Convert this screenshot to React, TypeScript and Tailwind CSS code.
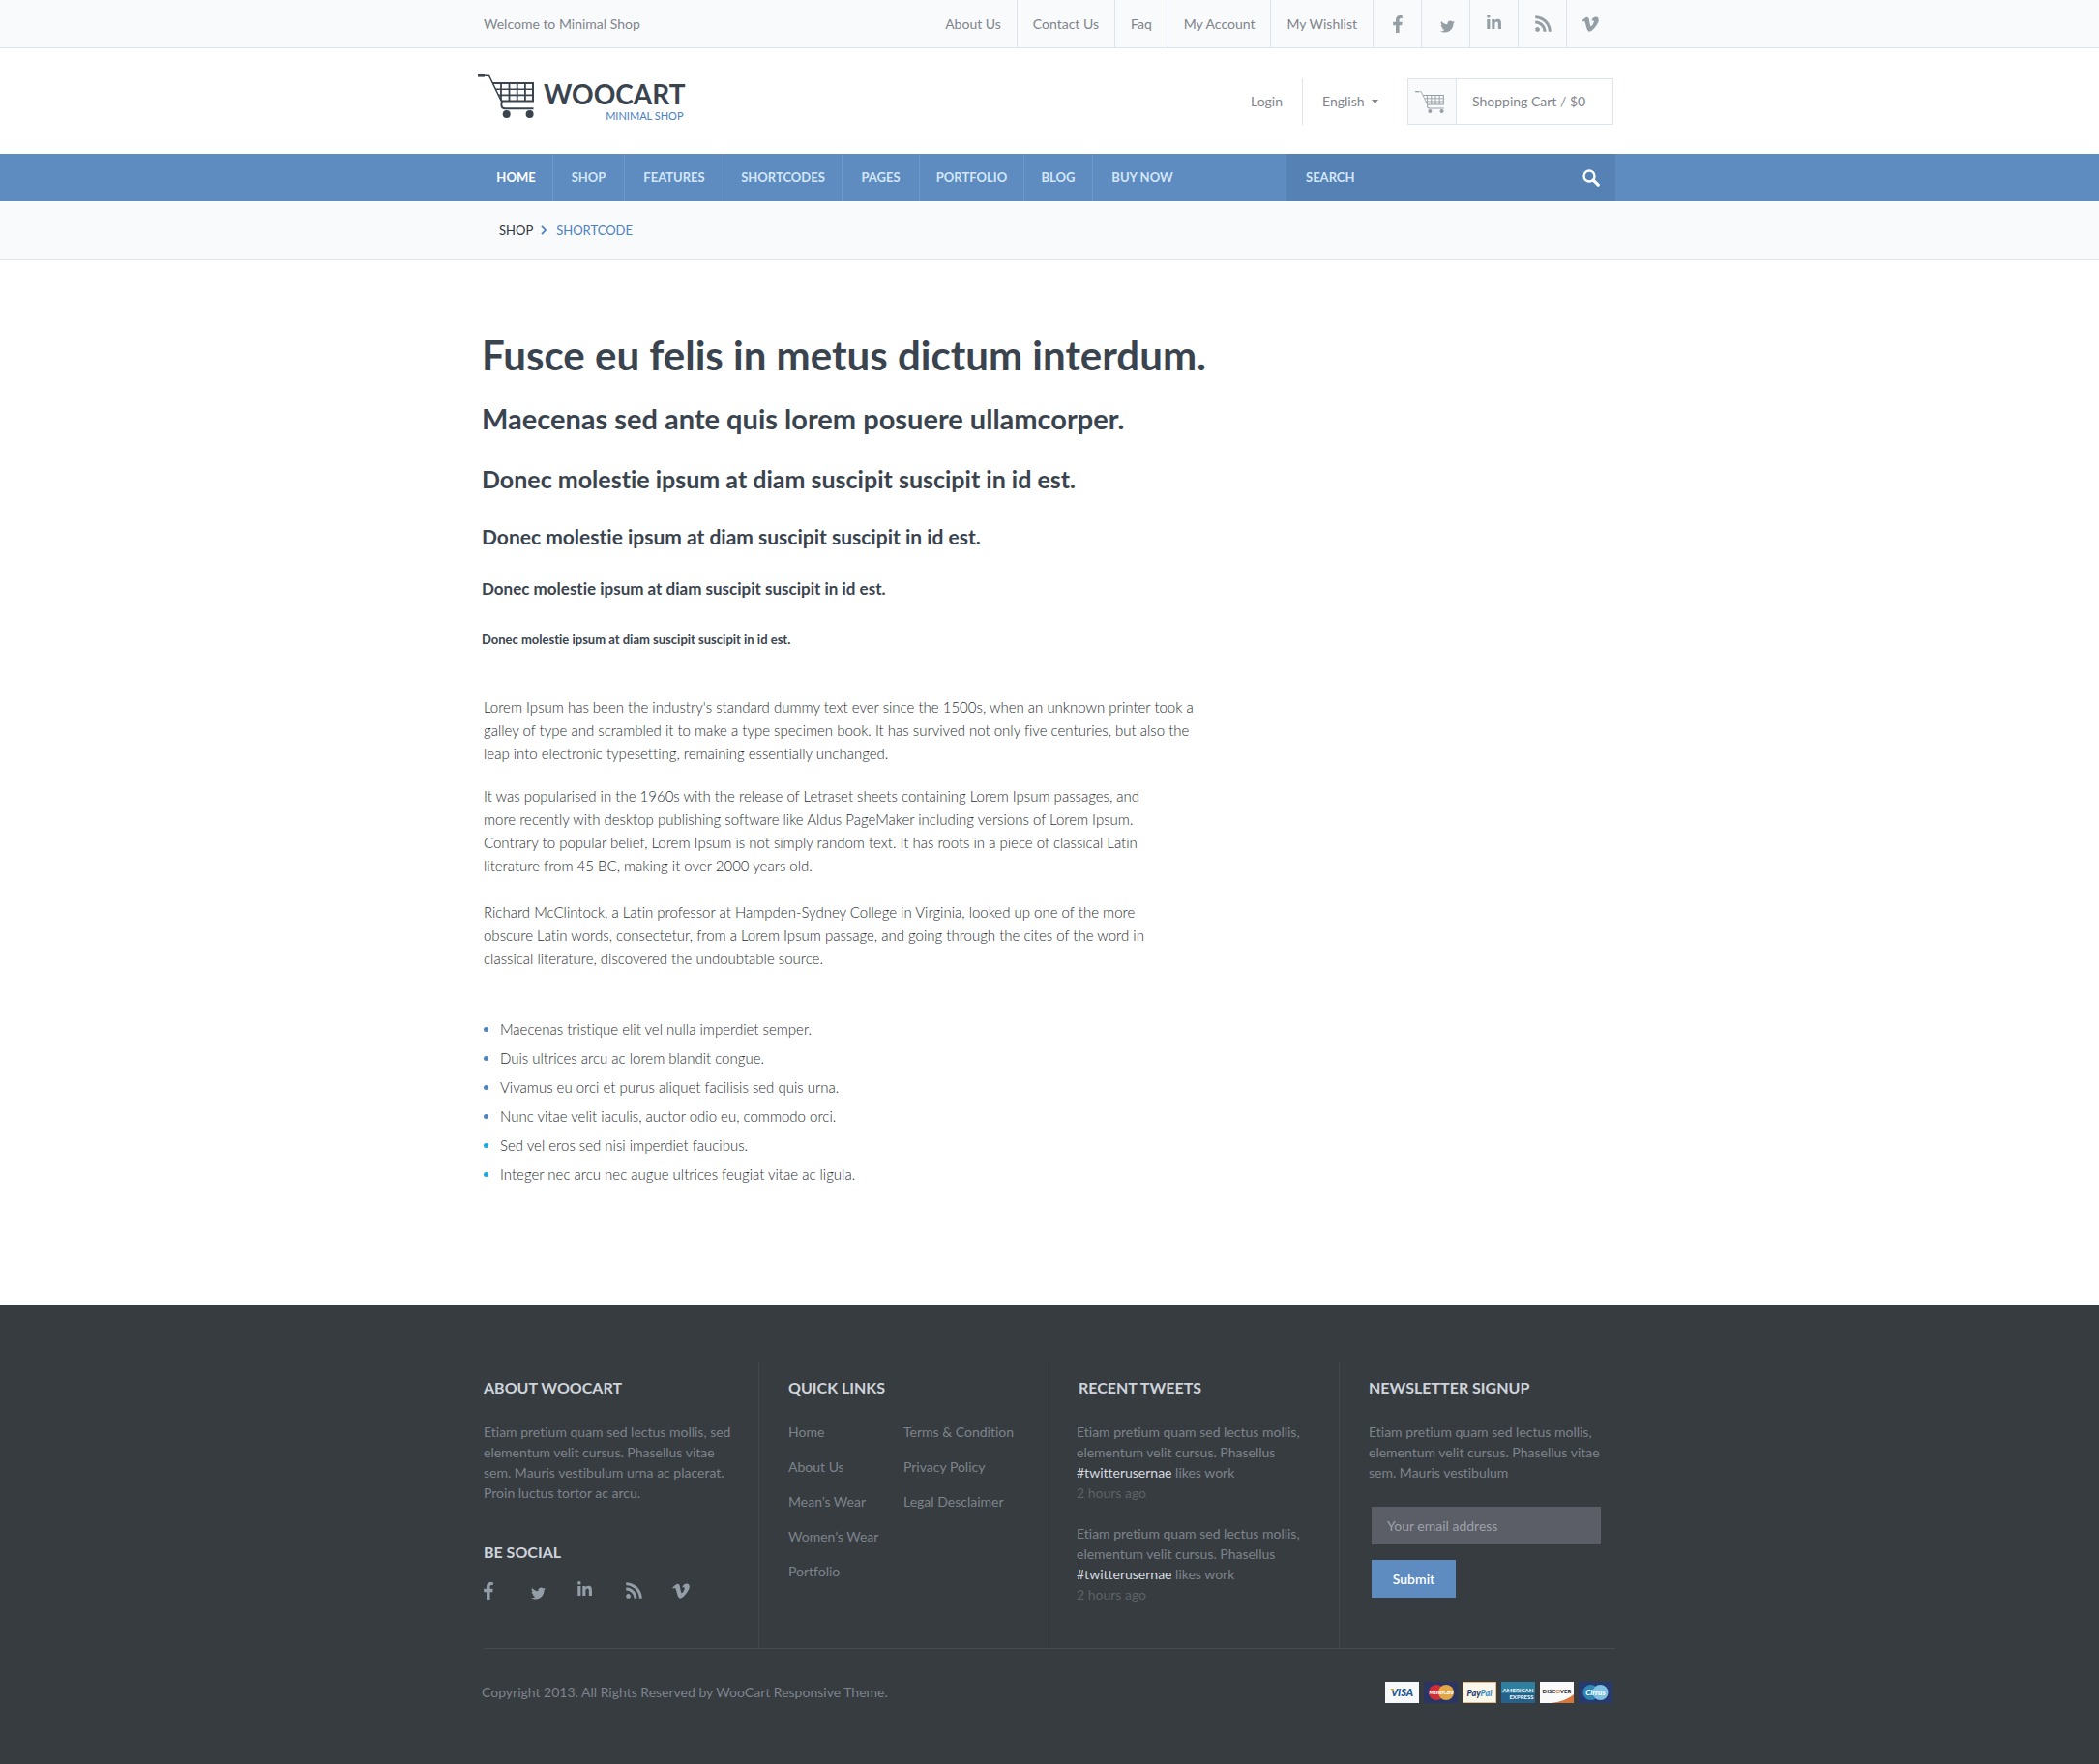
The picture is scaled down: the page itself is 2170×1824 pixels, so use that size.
import React from "react";
import { FaFacebookF, FaTwitter, FaLinkedinIn, FaRss, FaVimeoV } from "react-icons/fa";

const topLinks = ["About Us", "Contact Us", "Faq", "My Account"];

const socials = [
  { name: "Facebook", icon: <FaFacebookF size={18} x={1} y={1} /> },
  { name: "Twitter", icon: <FaTwitter size={15} x={4} y={5} /> },
  { name: "LinkedIn", icon: <FaLinkedinIn size={17} x={1} y={0} /> },
  { name: "RSS", icon: <FaRss size={19} x={1} y={0} /> },
  { name: "Vimeo", icon: <FaVimeoV size={20} x={-1} y={0} /> },
];

const mainNav = [
  { label: "HOME", cell: "w-[72px] border-r text-white font-bold pr-1" },
  { label: "SHOP", cell: "w-[74px] border-r" },
  { label: "FEATURES", cell: "w-[103px] border-r" },
  { label: "SHORTCODES", cell: "w-[122px] border-r" },
  { label: "PAGES", cell: "w-[80px] border-r" },
  { label: "PORTFOLIO", cell: "w-[108px] border-r" },
  { label: "BLOG", cell: "w-[71px] border-r" },
  { label: "BUY NOW", cell: "w-[102px]" },
];

const bullets = [
  { text: "Maecenas tristique elit vel nulla imperdiet semper.", dot: "bg-[#4f83bd]" },
  { text: "Duis ultrices arcu ac lorem blandit congue.", dot: "bg-[#4f83bd]" },
  { text: "Vivamus eu orci et purus aliquet facilisis sed quis urna.", dot: "bg-[#4f83bd]" },
  { text: "Nunc vitae velit iaculis, auctor odio eu, commodo orci.", dot: "bg-[#4f83bd]" },
  { text: "Sed vel eros sed nisi imperdiet faucibus.", dot: "bg-[#1ba8e0]" },
  { text: "Integer nec arcu nec augue ultrices feugiat vitae ac ligula.", dot: "bg-[#1ba8e0]" },
];

function SocialIcon({ children }: { children: React.ReactNode }) {
  return (
    <svg viewBox="0 0 20 20" className="h-5 w-5" aria-hidden="true">
      {children}
    </svg>
  );
}

function CartIcon({ className }: { className: string }) {
  return (
    <svg viewBox="0 0 58 45" className={className} fill="none" stroke="currentColor" aria-hidden="true">
      <rect x="0" y="0" width="7" height="2.6" fill="currentColor" stroke="none" />
      <path d="M6 1.3h5.6L25 29" strokeWidth="1.5" />
      <path d="M15.5 8.9H57v18.6H24.6" strokeWidth="2" />
      <path d="M18 15.2h39M21 21.4h36" strokeWidth="1.6" />
      <path d="M24 9v18M32.5 9v18.5M40.7 9v18.5M48.9 9v18.5" strokeWidth="1.8" />
      <path d="M25 28c-1.6 4.8-.4 7.3 4 7.3h28.5" strokeWidth="2" />
      <circle cx="29.7" cy="41" r="4" fill="currentColor" stroke="none" />
      <circle cx="53.6" cy="41" r="4" fill="currentColor" stroke="none" />
    </svg>
  );
}

function Cards() {
  const box = "h-[22px] w-[35px]";
  return (
    <div className="mr-[3px] flex gap-[5px] font-['Lato',sans-serif]">
      <svg viewBox="0 0 35 22" className={box} role="img" aria-label="Visa">
        <rect width="35" height="22" fill="#f7f8f9" />
        <text x="17.5" y="15" textAnchor="middle" fontSize="11" fontWeight="900" fontStyle="italic" fill="#23568f">VISA</text>
        <path d="M5 7h3.5l1 3.5z" fill="#e3a63a" />
      </svg>
      <svg viewBox="0 0 35 22" className={box} role="img" aria-label="MasterCard">
        <rect width="35" height="22" fill="#2a3563" />
        <circle cx="13" cy="11" r="8" fill="#cc2f38" />
        <circle cx="23" cy="11" r="8" fill="#e0a648" />
        <text x="18" y="13" textAnchor="middle" fontSize="5" fontWeight="900" fontStyle="italic" fill="#fff">MasterCard</text>
      </svg>
      <svg viewBox="0 0 35 22" className={box} role="img" aria-label="PayPal">
        <rect x="0.5" y="0.5" width="34" height="21" fill="#fbf6ea" stroke="#e3bd8a" />
        <text x="17.5" y="14.5" textAnchor="middle" fontSize="9" fontWeight="900" fontStyle="italic" fill="#25396f">
          Pay<tspan fill="#3a8fc4">Pal</tspan>
        </text>
      </svg>
      <svg viewBox="0 0 35 22" className={box} role="img" aria-label="American Express">
        <rect width="35" height="22" fill="#2f7f9f" />
        <rect y="12" width="35" height="10" fill="#25618a" />
        <text x="17.5" y="10.5" textAnchor="middle" fontSize="6" fontWeight="900" fill="#e2f1f8">AMERICAN</text>
        <text x="21" y="18" textAnchor="middle" fontSize="6" fontWeight="900" fill="#e2f1f8">EXPRESS</text>
      </svg>
      <svg viewBox="0 0 35 22" className={box} role="img" aria-label="Discover">
        <rect width="35" height="22" fill="#fafafa" />
        <path d="M12 22Q27 20 35 13v9z" fill="#d9773a" />
        <text x="17.5" y="12" textAnchor="middle" fontSize="6" fontWeight="900" fill="#33363b">
          DISC<tspan fill="#d9773a">O</tspan>VER
        </text>
      </svg>
      <svg viewBox="0 0 35 22" className={box} role="img" aria-label="Cirrus">
        <rect width="35" height="22" fill="#263a70" />
        <circle cx="12.5" cy="11" r="8" fill="#2f86b5" />
        <circle cx="22.5" cy="11" r="8" fill="#7fbfe0" />
        <text x="17.5" y="13.5" textAnchor="middle" fontSize="8" fontWeight="900" fontStyle="italic" fill="#fff">Cirrus</text>
      </svg>
    </div>
  );
}

function Tweet() {
  return (
    <p>
      Etiam pretium quam sed lectus mollis,
      <br />
      elementum velit cursus. Phasellus
      <br />
      <a href="#twitter" className="text-[#d5dae0]">#twitterusernae</a> likes work
      <br />
      <span className="text-[#5d6268]">2 hours ago</span>
    </p>
  );
}

const footerHeading = "text-base leading-6 font-bold text-[#cfd4dc]";

export default function App() {
  return (
    <div className="bg-white font-['Lato',sans-serif] text-sm text-[#7f858b] [font-variant-ligatures:no-common-ligatures]">
      <div className="border-b border-[#dfe4ec] bg-[#f9fafc]">
        <div className="mx-auto flex h-[49px] max-w-[1170px] items-stretch justify-between">
          <p className="flex items-center">Welcome to Minimal Shop</p>
          <nav className="flex" aria-label="Secondary">
            {topLinks.map((l) => (
              <a key={l} href="#top" className="flex items-center border-r border-[#dfe4ec] px-4">{l}</a>
            ))}
            <a href="#top" className="flex items-center border-r border-[#dfe4ec] px-4">My Wishlist</a>
            {socials.map((s) => (
              <a
                key={s.name}
                href="#social"
                aria-label={s.name}
                className="flex w-[50px] items-center justify-center border-r border-[#dfe4ec] text-[#949ea5] last:border-r-0"
              >
                <SocialIcon>{s.icon}</SocialIcon>
              </a>
            ))}
          </nav>
        </div>
      </div>

      <header className="mx-auto flex h-[109px] max-w-[1170px] items-start justify-between">
        <a href="#home" className="-ml-1.5 flex items-start gap-2.5 pt-[27px] text-[#3a444f]">
          <CartIcon className="h-[45px] w-[58px]" />
          <span className="flex flex-col items-end pt-1.5">
            <span className="text-[28px] leading-7 font-bold">WOOCART</span>
            <span className="pr-0.5 text-[11px] leading-[18px] text-[#4a80c4]">MINIMAL SHOP</span>
          </span>
        </a>
        <div className="mt-[31px] mr-0.5 flex h-12 items-center">
          <a href="#login" className="flex h-full items-center border-r border-[#dfe4ec] pr-5">Login</a>
          <div className="relative mr-[30px] ml-5">
            <select aria-label="Language" className="appearance-none bg-transparent pr-3.5 outline-none" defaultValue="English">
              <option>English</option>
            </select>
            <svg viewBox="0 0 7 4" className="pointer-events-none absolute top-1/2 right-0 h-1 w-[7px] -translate-y-1/2" aria-hidden="true">
              <path d="M0 0h7L3.5 4z" fill="#7f858b" />
            </svg>
          </div>
          <a href="#cart" className="flex h-12 w-[213px] items-stretch border border-[#dfe4ec]">
            <span className="flex w-[50px] items-center justify-center border-r border-[#dfe4ec] bg-[#f9fafc] text-[#949ea5]">
              <CartIcon className="-ml-1.5 h-[23px] w-[30px]" />
            </span>
            <span className="flex items-center pl-4">Shopping Cart / $0</span>
          </a>
        </div>
      </header>

      <div className="bg-[#5e8cc0]">
        <div className="mx-auto flex h-[49px] max-w-[1170px] items-stretch justify-between text-[13px] text-[#d3e6f8]">
          <nav className="flex" aria-label="Main">
            {mainNav.map((n) => (
              <a key={n.label} href="#nav" className={`flex items-center justify-center border-[#6c98ca] font-bold ${n.cell}`}>
                {n.label}
              </a>
            ))}
          </nav>
          <form className="flex w-[340px] items-stretch bg-[#5581b5]" onSubmit={(e) => e.preventDefault()}>
            <input
              type="search"
              aria-label="Search"
              placeholder="SEARCH"
              className="min-w-0 flex-1 bg-transparent pl-5 font-bold outline-none placeholder:text-[#d3e6f8]"
            />
            <button type="submit" aria-label="Submit search" className="pr-4 pl-3">
              <svg viewBox="0 0 18 18" className="h-[18px] w-[18px]" fill="none" stroke="#fff" aria-hidden="true">
                <circle cx="7" cy="7" r="5.5" strokeWidth="2.4" />
                <path d="M11.2 11.2L16.2 16.2" strokeWidth="3.2" strokeLinecap="round" />
              </svg>
            </button>
          </form>
        </div>
      </div>

      <div className="border-b border-[#dfe4ec] bg-[#f9fafc]">
        <nav aria-label="Breadcrumb" className="mx-auto flex h-[60px] max-w-[1170px] items-center pl-4 text-[13px]">
          <a href="#shop" className="text-[#2f363d]">SHOP</a>
          <svg viewBox="0 0 6 10" className="mr-2.5 ml-2 h-2.5 w-1.5" fill="none" stroke="#4a80c4" strokeWidth="1.8" aria-hidden="true">
            <path d="M1 .8L5 5 1 9.2" />
          </svg>
          <a href="#shortcode" className="text-[#4a80c4]">SHORTCODE</a>
        </nav>
      </div>

      <main className="mx-auto max-w-[1170px] pt-[72px] pb-[120px]">
        <div className="-ml-0.5 text-[#3a444f]">
          <h1 className="text-[42px] leading-[52px] font-bold">Fusce eu felis in metus dictum interdum.</h1>
          <h2 className="mt-[22px] text-[29px] leading-9 font-bold">Maecenas sed ante quis lorem posuere ullamcorper.</h2>
          <h3 className="mt-7 text-[25px] leading-8 font-bold">Donec molestie ipsum at diam suscipit suscipit in id est.</h3>
          <h4 className="mt-[30px] text-[21px] leading-7 font-bold">Donec molestie ipsum at diam suscipit suscipit in id est.</h4>
          <h5 className="mt-7 text-[17px] leading-6 font-bold">Donec molestie ipsum at diam suscipit suscipit in id est.</h5>
          <h6 className="mt-[30px] text-[13px] leading-5 font-bold">Donec molestie ipsum at diam suscipit suscipit in id est.</h6>
        </div>
        <div className="mt-12 text-[15px] leading-6 font-light text-[#2b2f34]">
          <p>
            Lorem Ipsum has been the industry's standard dummy text ever since the 1500s, when an unknown printer took a
            <br />
            galley of type and scrambled it to make a type specimen book. It has survived not only five centuries, but also the
            <br />
            leap into electronic typesetting, remaining essentially unchanged.
          </p>
          <p className="mt-5">
            It was popularised in the 1960s with the release of Letraset sheets containing Lorem Ipsum passages, and
            <br />
            more recently with desktop publishing software like Aldus PageMaker including versions of Lorem Ipsum.
            <br />
            Contrary to popular belief, Lorem Ipsum is not simply random text. It has roots in a piece of classical Latin
            <br />
            literature from 45 BC, making it over 2000 years old.
          </p>
          <p className="mt-6">
            Richard McClintock, a Latin professor at Hampden-Sydney College in Virginia, looked up one of the more
            <br />
            obscure Latin words, consectetur, from a Lorem Ipsum passage, and going through the cites of the word in
            <br />
            classical literature, discovered the undoubtable source.
          </p>
          <ul className="mt-[46px] leading-[30px]">
            {bullets.map((b) => (
              <li key={b.text} className="flex items-center gap-3">
                <span className={`h-[5px] w-[5px] rounded-full ${b.dot}`} />
                {b.text}
              </li>
            ))}
          </ul>
        </div>
      </main>

      <footer className="bg-[#373c40] pt-[58px] leading-[21px] text-[#7d838b]">
        <div className="mx-auto max-w-[1170px]">
          <div className="grid grid-cols-[19fr_20fr_20fr_19fr] border-b border-[#464b50]">
            <section className="border-r border-[#42474c] pt-4">
              <h3 className={footerHeading}>ABOUT WOOCART</h3>
              <p className="mt-[23px]">
                Etiam pretium quam sed lectus mollis, sed
                <br />
                elementum velit cursus. Phasellus vitae
                <br />
                sem. Mauris vestibulum urna ac placerat.
                <br />
                Proin luctus tortor ac arcu.
              </p>
              <h3 className={`mt-[39px] ${footerHeading}`}>BE SOCIAL</h3>
              <div className="mt-[18px] -ml-[5px] flex gap-[30px] text-[#949ea8]">
                {socials.map((s) => (
                  <a key={s.name} href="#social" aria-label={s.name}>
                    <SocialIcon>{s.icon}</SocialIcon>
                  </a>
                ))}
              </div>
            </section>
            <section className="border-r border-[#42474c] pt-4 pl-[30px]">
              <h3 className={footerHeading}>QUICK LINKS</h3>
              <div className="mt-[23px] grid grid-cols-[119px_1fr]">
                <ul className="flex flex-col gap-[15px]">
                  {["Home", "About Us", "Mean’s Wear", "Women’s Wear", "Portfolio"].map((l) => (
                    <li key={l}><a href="#link">{l}</a></li>
                  ))}
                </ul>
                <ul className="flex flex-col gap-[15px]">
                  {["Terms & Condition", "Privacy Policy", "Legal Desclaimer"].map((l) => (
                    <li key={l}><a href="#link">{l}</a></li>
                  ))}
                </ul>
              </div>
            </section>
            <section className="border-r border-[#42474c] pt-4 pb-[45px] pl-[30px]">
              <h3 className={footerHeading}>RECENT TWEETS</h3>
              <div className="mt-[23px] -ml-0.5 flex flex-col gap-[21px]">
                <Tweet />
                <Tweet />
              </div>
            </section>
            <section className="pt-4 pl-[30px]">
              <h3 className={footerHeading}>NEWSLETTER SIGNUP</h3>
              <p className="mt-[23px]">
                Etiam pretium quam sed lectus mollis,
                <br />
                elementum velit cursus. Phasellus vitae
                <br />
                sem. Mauris vestibulum
              </p>
              <form className="mt-[25px] mr-[15px] ml-[3px] flex flex-col items-start gap-4" onSubmit={(e) => e.preventDefault()}>
                <input
                  type="email"
                  aria-label="Your email address"
                  placeholder="Your email address"
                  className="h-[39px] w-full bg-[#5b5e67] px-4 text-white outline-none placeholder:text-[#9da1a9]"
                />
                <button type="submit" className="h-[39px] w-[87px] bg-[#5e8cc0] font-semibold text-white">Submit</button>
              </form>
            </section>
          </div>
          <div className="-ml-0.5 flex items-start justify-between pt-[34px] pb-[63px]">
            <p>Copyright 2013. All Rights Reserved by WooCart Responsive Theme.</p>
            <Cards />
          </div>
        </div>
      </footer>
    </div>
  );
}
